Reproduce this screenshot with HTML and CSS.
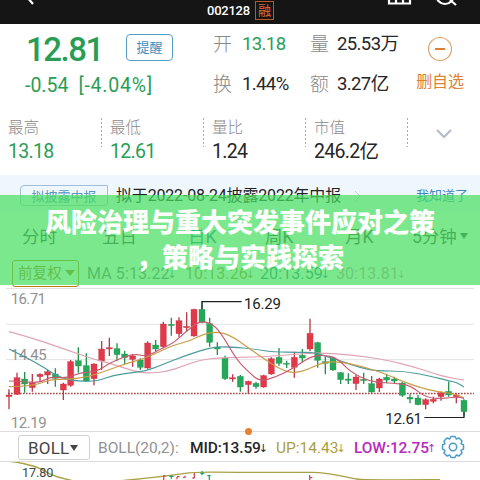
FILE: index.html
```html
<!DOCTYPE html>
<html lang="zh-CN">
<head>
<meta charset="utf-8">
<title>002128</title>
<link rel="stylesheet" href="styles.css">
</head>
<body>
<main class="app">
  <header class="topbar">
    <svg class="back" width="10" height="24" viewBox="0 0 10 24"><path d="M1-3 7 4" /></svg>
    <span class="code">002128</span><span class="margin-tag">融</span>
    <svg class="tools" width="80" height="24" viewBox="0 0 80 24"><path d="M2-4V3.5H23V-4M9 4V0M16 4V-2"/><circle cx="58" cy="-4.5" r="8.5"/><path d="m63 0 6 5" stroke-width="3"/></svg>
  </header>

  <section class="quote">
    <div class="price">
      <div class="price-top"><span class="last">12.81</span><span class="remind">提醒</span></div>
      <div class="change"><span>-0.54</span><span class="pct">[-4.04%]</span></div>
    </div>
    <dl class="facts">
      <dt>开</dt><dd class="down">13.18</dd><dt>量</dt><dd>25.53万</dd>
      <dt>换</dt><dd>1.44%</dd><dt>额</dt><dd>3.27亿</dd>
    </dl>
    <div class="remove">
      <svg width="26" height="26" viewBox="0 0 26 26"><circle cx="13" cy="13" r="11.5"/><path d="M8 13H18"/></svg>
      <span>删自选</span>
    </div>
  </section>

  <section class="stats">
    <div class="stat"><span>最高</span><b class="down">13.18</b></div>
    <div class="stat"><span>最低</span><b class="down">12.61</b></div>
    <div class="stat"><span>量比</span><b>1.24</b></div>
    <div class="stat"><span>市值</span><b>246.2亿</b></div>
    <svg class="expand" width="18" height="12" viewBox="0 0 18 12"><path d="m2 2 7 7 7-7"/></svg>
  </section>

  <section class="notice">
    <span class="notice-tag">拟披露中报</span>
    <span class="notice-text">拟于2022-08-24披露2022年中报</span>
    <svg width="8" height="12" viewBox="0 0 8 12"><path d="m1 1 5 5-5 5"/></svg>
    <span class="dismiss">我知道了</span>
  </section>

  <nav class="tabs"><span>分时</span><span>五日</span><span class="active">日K</span><span>周K</span><span>月K</span><span>5分钟<i class="caret"></i></span></nav>

  <div class="ma">
    <span class="adjust">前复权<i class="caret"></i></span>
    <span class="ma5">MA 5:13.22<small>↓</small></span><span class="ma10">10:13.26<small>↓</small></span><span class="ma20">20:13.59<small>↓</small></span><span class="ma30">30:13.81<small>↓</small></span>
  </div>

  <svg class="chart" width="480" height="143" viewBox="0 24 1440 429">
    <path class="grid" d="M18 25.5H1422M18 133H1422M18 239H1422"/>
    <g class="scale"><text x="32" y="73" textLength="106">16.71</text><text x="32" y="239" textLength="108">14.45</text><text x="32" y="443" textLength="108">12.19</text></g>
    <path class="last-line" d="M24 340.5H1422"/>
    <g id="candles"></g>
    <g id="averages"></g>
    <path class="leader" d="M606 88V65H725M1273 412.500H1392V395"/>
    <g class="mark"><text x="732" y="86" textLength="111">16.29</text><text x="1156" y="433" textLength="110">12.61</text></g>
  </svg>

  <div class="boll">
    <i class="dot"></i>
    <span class="picker">BOLL<i class="caret"></i></span>
    <span class="params">BOLL(20,2):</span><span class="mid">MID:13.59<small>↓</small></span><span class="up">UP:14.43<small>↓</small></span><span class="low">LOW:12.75<small>↑</small></span>
    <svg class="gear" width="24" height="24" viewBox="-12 -12 24 24"><path d="M-2-10.500H2L3.300-8 6-9 9 -6 8-3.300 10.500-2V2L8 3.300 9 6 6 9 3.300 8 2 10.500H-2L-3.300 8-6 9-9 6-8 3.300-10.500 2V-2L-8-3.300-9-6-6-9-3.300-8Z"/><circle r="3.700"/></svg>
  </div>

  <svg class="sub" width="480" height="18" viewBox="0 126 1440 54">
    <path class="band" d="M25 124C50 125 95 135 120 146S145 167 215 181M370 181C440 176 500 168 550 161S600 157 720 157H935C1000 158 1030 171 1070 177S1200 178 1320 179"/>
    <text x="66" y="171" textLength="94">17.80</text>
    <path class="tick-r" d="M491 166V180M491 168H497M531 170V178M531 170H539M555 167V174M549 172H557M583 159V175M577 174H583M929 165V180M929 173H937"/>
    <path class="tick-g" d="M514 166V176M508 169H521M606 153V166M601 160H613M628 166V180M622 167H632"/>
  </svg>

  <div class="banner"><p>风险治理与重大突发事件应对之策<br>，策略与实践探索</p></div>
</main>
<script src="chart.js"></script>
</body>
</html>
```
FILE: styles.css
```css
* { box-sizing: border-box; }
body { margin: 0; background: #fff; }
svg { display: block; flex: none; fill: none; }
.app {
  position: relative; width: 480px; height: 480px; overflow: hidden;
  display: flex; flex-direction: column;
  font-family: Roboto, "Noto Sans CJK SC", sans-serif; color: #262626; white-space: nowrap;
}
.app > * { flex: none; }
.down { color: #2a9d55; }
.caret { display: inline-block; border: 4px solid transparent; border-top: 6px solid currentColor; border-bottom: 0; }

.topbar { height: 24px; background: #151515; display: flex; padding-left: 26px; }
.back path, .tools path, .tools circle { stroke: #fff; stroke-width: 2.2; }
.code { margin-left: 171px; width: 48px; color: #fff; font-size: 13px; font-weight: 500; line-height: 22px; letter-spacing: -.25px; }
.margin-tag { width: 19px; height: 19px; margin-top: 1px; border: 1px solid #b85a28; color: #e06c2e; font-size: 13px; line-height: 17px; text-align: center; }
.tools { margin-left: 113px; }

.quote { height: 84px; display: grid; grid-template-columns: 213px 197px 60px; }
.price { padding: 8px 0 0 25px; color: #2a9d55; }
.price-top { display: flex; height: 34px; }
.last { width: 101px; font-size: 33px; font-weight: 500; line-height: 35px; letter-spacing: -1.5px; padding-left: 1px; }
.remind { width: 47px; height: 27px; margin-top: 2px; border: 1px solid #559fc6; border-radius: 4px; color: #3f8fbd; font-size: 13px; line-height: 26px; text-align: center; }
.change { display: flex; gap: 10px; font-size: 19.5px; line-height: 24px; margin-top: 8px; }
.pct { letter-spacing: .8px; }
.facts { display: grid; grid-template-columns: 29px 68px 27px 73px; grid-template-rows: 40px 40px; margin: 0; font-size: 18.5px; line-height: 41px; letter-spacing: -.6px; }
.facts dt { color: #8a8a8a; font-size: 19px; font-weight: 300; }
.facts dd { margin: 0; }
.remove { display: flex; flex-direction: column; align-items: center; padding-top: 12px; color: #dd8233; font-size: 16px; line-height: 20px; }
.remove span { margin-top: 10px; letter-spacing: -.1px; }
.remove circle { stroke: #dda36c; stroke-width: 1.200; }
.remove path { stroke: #dd8233; stroke-width: 2; }

.stats { height: 67px; padding: 10px 0 0 8px; display: flex; }
.stat { width: 102px; display: flex; flex-direction: column; background: repeating-linear-gradient(#aaa 0 2px, transparent 2px 4px) 93px 0 / 1px 29px no-repeat; }
.stat span { font-size: 15.500px; line-height: 20px; color: #8a8a8a; font-weight: 300; }
.stat b { font-size: 19.500px; font-weight: 400; line-height: 28px; letter-spacing: -.7px; }
.expand { margin: 10px 0 0 19px; }
.expand path { stroke: #b3bac6; stroke-width: 2; }

.notice { height: 39px; padding: 10px 0 0 20px; display: flex; background: #eef6fe; line-height: 21px; }
.notice-tag { width: 88px; height: 21px; border: 1px solid #9fc0dc; border-radius: 4px 0 4px 4px; color: #5b96c3; font-size: 13px; text-align: center; }
.notice-text { width: 246px; padding-left: 8px; font-size: 16px; letter-spacing: -.18px; color: #222; }
.notice svg { margin-top: 5px; }
.notice path { stroke: #c6ced6; }
.dismiss { margin-left: 54px; color: #4088bf; font-size: 13px; }

.tabs { height: 45px; display: grid; grid-template-columns: 80px 86px 77px 80px 67px 60px; padding-left: 22px; font-size: 17.500px; line-height: 46px; color: #3c3c3c; }
.tabs .active { color: #1c6f9c; }
.tabs .caret { margin-left: 3px; vertical-align: 4px; }

.ma { height: 29px; padding-left: 12px; display: flex; font-size: 16px; line-height: 29px; color: #6c6c6c; letter-spacing: .1px; }
.ma small, .boll small { font-size: 11px; letter-spacing: 0; font-family: "DejaVu Sans"; display: inline-block; width: 5px; text-indent: -2px; vertical-align: 1px; }
.adjust { width: 67px; height: 27px; margin: 1px 8px 0 0; border: 1.500px solid #b87a10; border-radius: 3px; color: #a06c14; font-size: 14.500px; line-height: 25px; padding-left: 5px; }
.adjust .caret { margin-left: 3px; border-width: 6px 5px 0; vertical-align: 2px; }
.ma5 { width: 98px; }
.ma10 { width: 75px; color: #a08438; }
.ma20 { width: 76px; color: #18788c; }
.ma30 { color: #c090a4; }

.chart text, .sub text { font-family: Roboto, sans-serif; }
.grid { stroke: #e2e2e2; stroke-width: 3; }
.scale { fill: #929292; font-size: 45px; }
.last-line { stroke: #b04848; stroke-width: 4; stroke-dasharray: 5 4; }
.leader { stroke: #222; stroke-width: 3.500; }
.mark { fill: #222; font-size: 45px; }
.chart .rise { fill: #e23847; stroke: #b93a48; }
.chart .fall { fill: #27a75a; stroke: #21934d; }
.average { stroke-width: 3.500; stroke-linejoin: round; }

.boll { position: relative; height: 31px; padding: 3px 0 0 18px; display: flex; border-top: 1px solid #ddd; border-bottom: 1px solid #ddd; font-size: 15.500px; line-height: 26px; }
.dot { position: absolute; left: 245px; top: -4px; width: 7px; height: 7px; border-radius: 50%; background: #e8822f; }
.picker { width: 72px; height: 25px; border: 1px solid #d2d2d2; border-radius: 3px; padding-left: 9px; font-size: 17px; color: #444; line-height: 24px; letter-spacing: .2px; }
.picker .caret { margin-left: 1px; vertical-align: 3px; }
.params { width: 100px; padding-left: 8px; color: #929292; }
.mid { width: 86px; font-weight: 500; letter-spacing: -.1px; }
.up { width: 78px; color: #aaa042; }
.low { width: 87px; color: #b82abd; font-weight: 500; letter-spacing: -.1px; }
.gear path, .gear circle { stroke: #4b9cc6; stroke-width: 1.500; stroke-linejoin: round; }

.band { stroke: #aaa044; stroke-width: 4; }
.sub text { fill: #444; font-size: 38px; }
.tick-r { stroke: #d34c5c; stroke-width: 4; }
.tick-g { stroke: #26a76b; stroke-width: 4; }

.banner { position: absolute; left: 0; top: 195px; width: 480px; height: 90px; background: rgba(74, 223, 97, .72); }
.banner p { margin: 11px 0 0; text-align: center; color: #fff; font: 900 26px/35px Roboto, "Noto Sans CJK SC", sans-serif; }
```
FILE: chart.js
```javascript
const NS = "http://www.w3.org/2000/svg";
const el = (parent, name, attrs) => {
  const node = document.createElementNS(NS, name);
  for (const key in attrs) node.setAttribute(key, attrs[key]);
  parent.appendChild(node);
};

// x, high, body top, body bottom, low, rising
const candles = [
  [27,328,345,350,388,1],[51,278,293,343,345,1],[74,276,297,312,338,0],[97,282,308,323,335,1],
  [120,280,283,290,305,1],[143,270,275,285,312,1],[166,265,282,295,320,0],[190,308,312,330,360,1],
  [212,240,245,316,320,1],[235,202,242,258,278,0],[259,220,257,303,305,0],[282,250,252,296,316,1],
  [305,183,207,243,270,1],[328,173,203,207,228,1],[351,190,206,224,244,0],[374,212,222,233,252,0],
  [398,222,228,238,260,1],[421,235,240,262,270,0],[443,184,189,264,266,1],[467,180,195,207,215,0],
  [490,125,132,200,205,1],[514,113,133,137,167,0],[537,112,122,161,172,1],[560,97,139,143,155,1],
  [582,86,88,168,170,1],[606,64,88,127,130,0],[629,113,131,187,200,0],[652,187,201,207,225,0],
  [675,227,234,296,300,0],[698,283,293,297,305,1],[721,285,289,321,335,0],[745,302,304,314,342,1],
  [768,305,310,320,326,0],[791,284,287,321,323,1],[814,232,236,282,284,1],[837,204,232,250,257,0],
  [860,242,250,253,264,0],[883,215,232,262,293,1],[907,207,226,234,247,0],[930,116,160,207,214,1],
  [953,185,188,241,263,0],[976,230,245,250,283,0],[999,230,234,270,272,0],[1022,276,278,299,312,0],
  [1045,280,297,301,312,0],[1068,285,291,311,330,1],[1091,278,298,302,312,0],[1115,288,311,336,338,0],
  [1138,293,297,324,336,1],[1160,281,292,300,310,0],[1183,290,297,303,310,0],[1207,305,309,346,350,0],
  [1230,343,352,357,370,0],[1254,345,354,374,376,0],[1277,355,359,374,388,1],[1300,350,358,364,370,1],
  [1323,335,338,350,362,1],[1346,305,334,345,350,0],[1369,340,345,350,370,1],[1392,358,361,395,410,0]
];
const candleLayer = document.getElementById("candles");
for (const [x, high, top, bottom, low, rising] of candles) {
  const cls = rising ? "rise" : "fall";
  el(candleLayer, "path", { class: cls, "stroke-width": 4, d: `M${x} ${high}V${low}` });
  el(candleLayer, "rect", { class: cls, "stroke-width": 1, x: x - 9, y: top, width: 18, height: bottom - top });
}

const averages = {
  "#dfa3b4": [27,155,100,175,200,210,290,240,330,250,400,273,440,280,500,275,550,258,600,240,650,234,720,232,800,230,880,223,960,218,1060,225,1160,240,1240,260,1300,280,1350,294,1392,300],
  "#4c9a9b": [27,207,90,238,145,270,170,288,215,302,290,305,340,285,400,278,440,272,480,257,560,225,640,200,700,201,760,207,820,216,900,217,940,217,970,226,1020,242,1080,263,1130,273,1210,273,1290,288,1345,302,1370,307,1392,321],
  "#c99c49": [27,320,100,318,150,298,200,298,260,292,320,272,380,250,430,237,480,215,520,195,570,183,610,162,650,155,690,165,740,200,790,235,840,268,880,280,920,270,960,250,1010,243,1090,260,1160,283,1210,305,1260,323,1310,335,1360,340,1392,353],
  "#c85c70": [27,303,70,305,120,308,150,290,200,295,240,278,290,275,330,248,400,220,440,230,480,208,520,190,560,153,600,122,640,132,670,170,710,240,750,280,780,305,830,290,880,265,930,230,970,225,1010,233,1050,275,1110,305,1180,310,1230,315,1280,355,1340,355,1370,350,1392,355]
};
const averageLayer = document.getElementById("averages");
for (const color in averages) {
  const v = averages[color];
  let d = `M${v[0]} ${v[1]}`;
  for (let i = 2; i < v.length - 2; i += 2) {
    d += `Q${v[i]} ${v[i + 1]} ${(v[i] + v[i + 2]) / 2} ${(v[i + 1] + v[i + 3]) / 2}`;
  }
  d += `L${v[v.length - 2]} ${v[v.length - 1]}`;
  el(averageLayer, "path", { class: "average", stroke: color, d });
}
```
